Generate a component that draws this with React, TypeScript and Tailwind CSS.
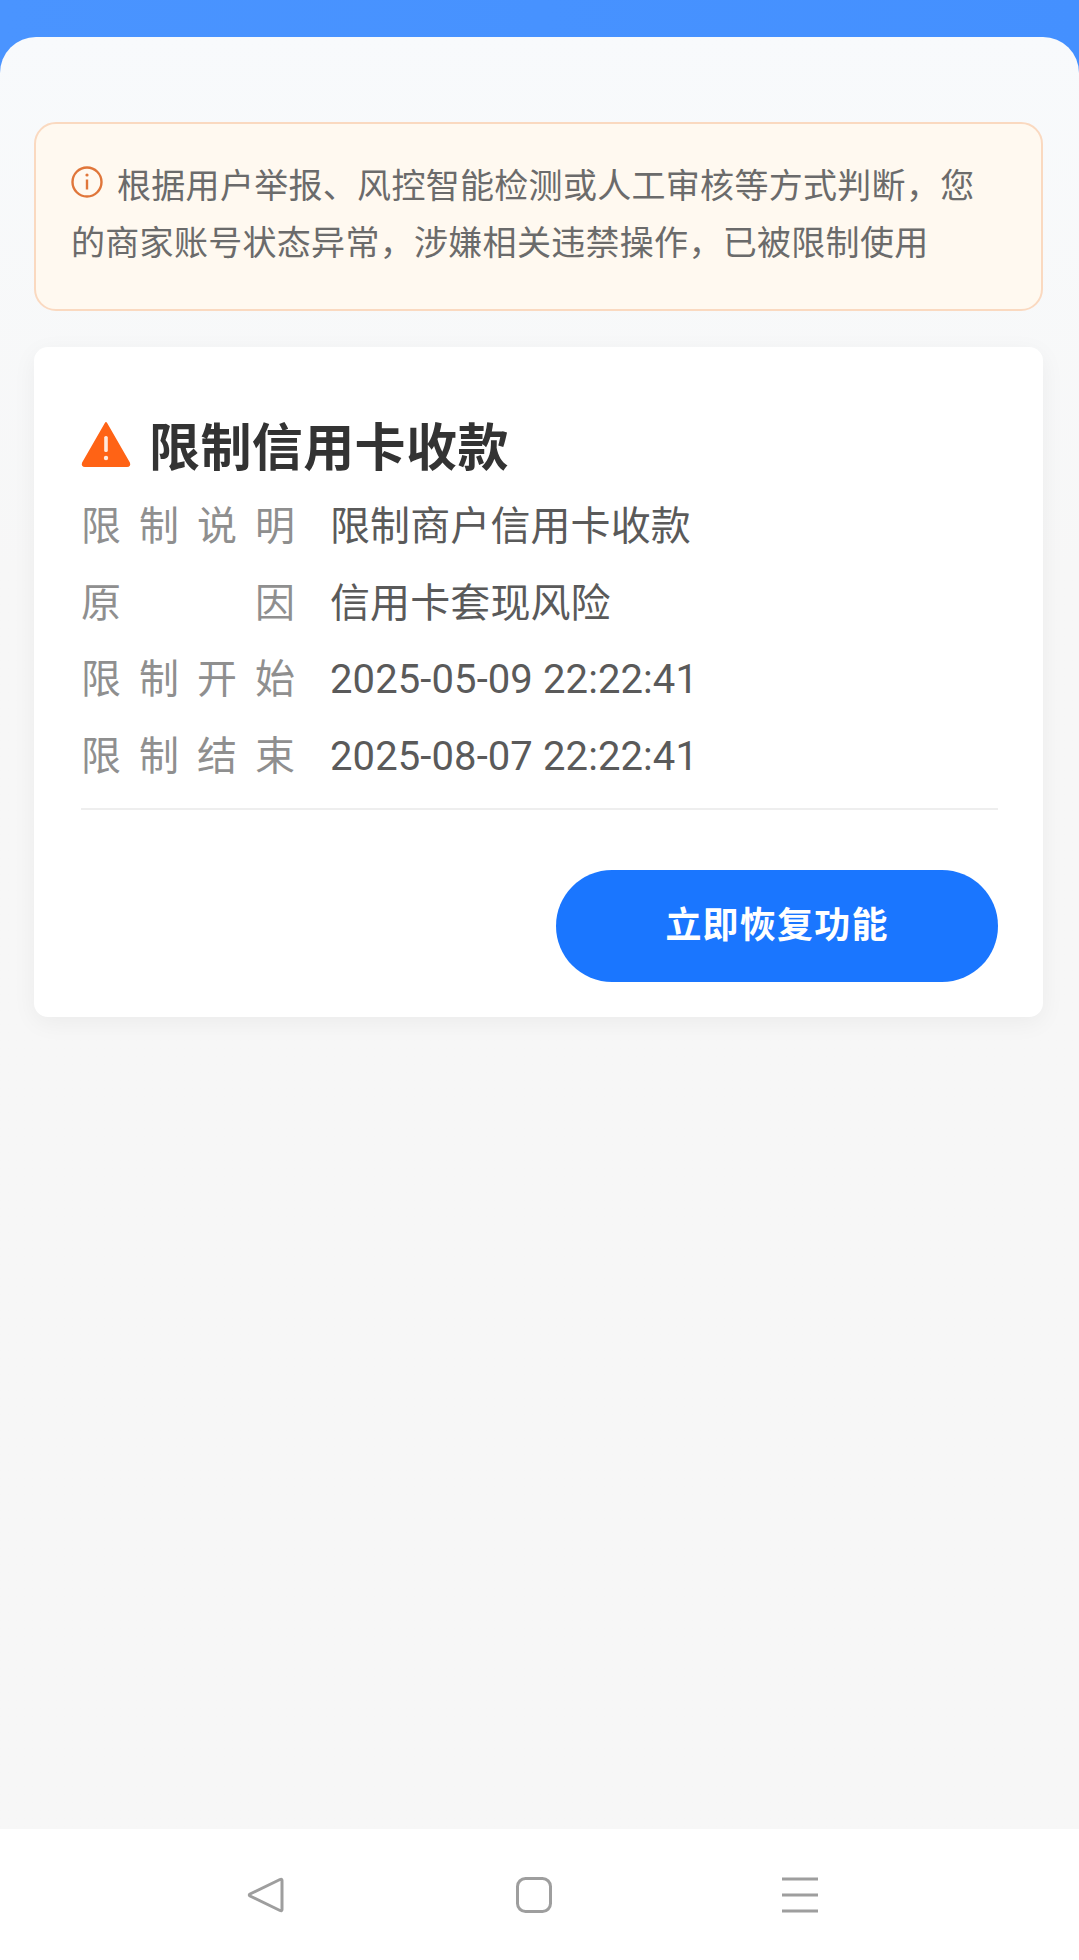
import React from 'react';

const rows = [
  { label: ['限', '制', '说', '明'], value: '限制商户信用卡收款' },
  { label: ['原', '因'], value: '信用卡套现风险' },
  { label: ['限', '制', '开', '始'], value: '2025-05-09 22:22:41' },
  { label: ['限', '制', '结', '束'], value: '2025-08-07 22:22:41' },
];

const font = 'font-[Roboto,"Noto_Sans_CJK_SC",sans-serif]';

export default function App() {
  return (
    <div className={`flex h-[1960px] flex-col bg-gradient-to-r from-[#4a94ff] to-[#4490ff] ${font}`}>
      <main className="mt-[37px] flex-1 rounded-t-[36px] bg-gradient-to-b from-[#f8fafc] to-[#f7f7f7] to-[30%] pl-[34px] pr-[36px] pt-[85px]">
        {/* 提示 */}
        <div className="h-[189px] rounded-[22px] border-2 border-[#fad9c0] bg-[#fff9f0] pl-[35px] pr-[50px] pt-[34px] text-[34px] leading-[57px] tracking-[0.3px] text-[#6b6b6b]">
          <svg viewBox="0 0 32 32" className="mr-[14px] inline-block h-[32px] w-[32px] align-[0px]" fill="none">
            <circle cx="16" cy="16" r="14.5" stroke="#e0763a" strokeWidth="2.4" />
            <path d="M16 13.5v10" stroke="#e0763a" strokeWidth="2.4" />
            <circle cx="16" cy="9" r="1.6" fill="#e0763a" />
          </svg>
          根据用户举报、风控智能检测或人工审核等方式判断，您的商家账号状态异常，涉嫌相关违禁操作，已被限制使用
        </div>

        {/* 限制详情 */}
        <section className="mt-[36px] h-[670px] rounded-[14px] bg-white pl-[47px] pr-[45px] pt-[68px] shadow-[0_6px_24px_rgba(0,0,0,0.05)]">
          <h2 className="flex h-[66px] items-center gap-[18px] text-[51px] font-bold leading-none tracking-[0.4px] text-[#333333]">
            <svg viewBox="0 0 50 46" className="mb-[8px] h-[46px] w-[50px] shrink-0">
              <path
                d="M25 2 L48 42 Q49 45 46 45 L4 45 Q1 45 2 42 Z"
                fill="#ff6315"
                stroke="#ff6315"
                strokeLinejoin="round"
                strokeWidth="2"
              />
              <rect x="23.2" y="15" width="3.6" height="16" rx="1.6" fill="#ffe9dc" />
              <circle cx="25" cy="37" r="2.2" fill="#ffe9dc" />
            </svg>
            限制信用卡收款
          </h2>
          <dl className="mt-[8px] flex flex-col">
            {rows.map((row) => (
              <div key={row.value} className="flex h-[76.5px] items-center text-[40px]">
                <dt className="flex w-[214px] justify-between text-[#8f8f8f]">
                  {row.label.map((ch) => (
                    <span key={ch}>{ch}</span>
                  ))}
                </dt>
                <dd className="ml-[35px] tracking-[0.1px] text-[#5a5a5a]">{row.value}</dd>
              </div>
            ))}
          </dl>
          <div className="mt-[13px] border-t-2 border-[#eeeeee]" />
          <div className="mt-[60px] flex justify-end">
            <button className="h-[112px] w-[442px] rounded-full bg-[#1a76ff] text-[36px] font-bold tracking-[1.2px] text-white">
              立即恢复功能
            </button>
          </div>
        </section>
      </main>

      {/* 系统导航 */}
      <nav className="flex h-[131px] items-start bg-white pl-[247px] pt-[48px]">
        <svg viewBox="0 0 38 36" className="h-[36px] w-[38px]" fill="none" stroke="#9e9e9e" strokeWidth="3" strokeLinejoin="round">
          <path d="M35 3.5 Q35 1.5 33 2.5 L3 17 Q1.5 18 3 19 L33 33.5 Q35 34.5 35 32.5 Z" />
        </svg>
        <svg viewBox="0 0 36 36" className="ml-[231px] h-[36px] w-[36px]" fill="none" stroke="#9e9e9e" strokeWidth="3">
          <rect x="1.5" y="1.5" width="33" height="33" rx="8" />
        </svg>
        <svg viewBox="0 0 36 36" className="ml-[230px] h-[36px] w-[36px]" stroke="#9e9e9e" strokeWidth="3">
          <path d="M0 2h36M0 18h36M0 34h36" />
        </svg>
      </nav>
    </div>
  );
}
